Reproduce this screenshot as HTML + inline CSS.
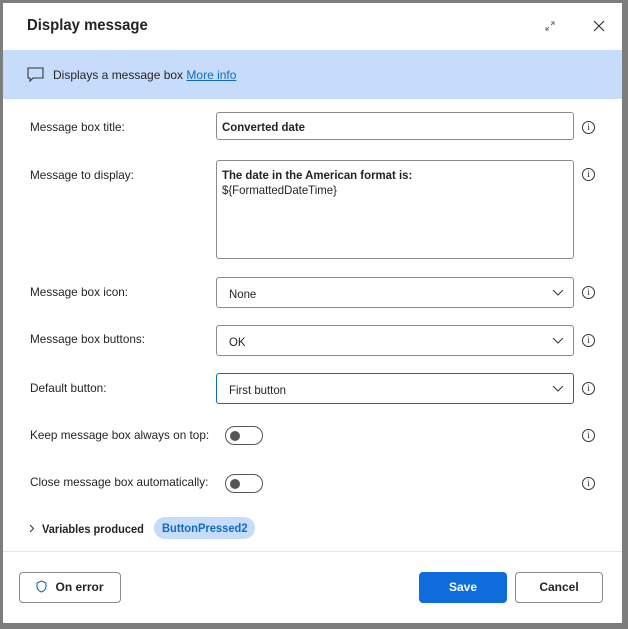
<!DOCTYPE html><html><head><style>
body{margin:0;width:628px;height:629px;background:#7d7d7d;font-family:"Liberation Sans",sans-serif;position:relative;overflow:hidden;color:#242424}
.d{position:absolute;left:3px;top:3px;width:619px;height:620px;background:#fff}
.a{position:absolute}
.s{display:inline-block;transform:scaleX(.95);transform-origin:0 50%;white-space:nowrap}
.lbl{position:absolute;left:30px;font-size:12px;color:#242424;transform:scaleX(.98);transform-origin:0 50%;white-space:nowrap}
.in{position:absolute;left:216px;width:358px;border:1px solid #8a8a8a;border-radius:3px;box-sizing:border-box;font-size:12px;background:#fff}
.info{position:absolute;left:582px;width:13px;height:13px;border:1px solid #333;border-radius:50%;box-sizing:border-box;font-size:9px;text-align:center;line-height:11px;font-family:"Liberation Serif",serif}
.chev{position:absolute;right:9px;top:11px}
.tg{position:absolute;left:225px;width:38px;height:19px;border:1px solid #555;border-radius:10px;box-sizing:border-box}
.tg::after{content:"";position:absolute;left:4px;top:4px;width:10px;height:10px;border-radius:50%;background:#555}
.btn{position:absolute;top:572px;height:31px;border:1px solid #8a8a8a;border-radius:4px;box-sizing:border-box;font-size:12px;text-align:center;line-height:29px;font-weight:bold}
</style></head><body>
<div class="d"></div>
<div class="a" style="left:27px;top:17px;font-size:16px;font-weight:bold"><span class="s" style="transform:scaleX(.93)">Display message</span></div>
<svg class="a" style="left:545px;top:21px" width="10" height="10"><path d="M1 9L4 6M9 1L6 4M6 1H9V4M1 6V9H4" stroke="#555" fill="none" stroke-width="0.8"/></svg>
<svg class="a" style="left:593px;top:20px" width="12" height="12"><path d="M1 1L11 11M11 1L1 11" stroke="#333" stroke-width="1.2"/></svg>
<div class="a" style="left:3px;top:50px;width:619px;height:49px;background:#c7dcfb"></div>
<svg class="a" style="left:27px;top:67px" width="17" height="16"><path d="M1 1H16V11H6L3 14V11H1Z" stroke="#333" fill="none" stroke-width="1.1"/></svg>
<div class="a" style="left:53px;top:68px;font-size:12px;white-space:nowrap">Displays a message box <span style="color:#0f6cbd;text-decoration:underline">More info</span></div>
<div class="lbl" style="top:120px">Message box title:</div>
<div class="in" style="top:112px;height:28px;padding:7px 5px;font-weight:bold"><span class="s">Converted date</span></div>
<div class="info" style="top:121px">i</div>
<div class="lbl" style="top:168px">Message to display:</div>
<div class="in" style="top:160px;height:99px;padding:7px 5px;line-height:15px"><span class="s"><b>The date in the American format is:</b><br>${FormattedDateTime}</span></div>
<div class="info" style="top:168px">i</div>
<div class="lbl" style="top:285px">Message box icon:</div>
<div class="in" style="top:277px;height:31px;padding:9px 12px"><span class="s">None</span><svg class="chev" width="12" height="8"><path d="M1 1L6 6L11 1" stroke="#333" fill="none"/></svg></div>
<div class="info" style="top:286px">i</div>
<div class="lbl" style="top:332px">Message box buttons:</div>
<div class="in" style="top:325px;height:31px;padding:9px 12px"><span class="s">OK</span><svg class="chev" width="12" height="8"><path d="M1 1L6 6L11 1" stroke="#333" fill="none"/></svg></div>
<div class="info" style="top:334px">i</div>
<div class="lbl" style="top:381px">Default button:</div>
<div class="in" style="top:373px;height:31px;padding:9px 12px;border-color:#0f6cbd"><span class="s">First button</span><svg class="chev" width="12" height="8"><path d="M1 1L6 6L11 1" stroke="#333" fill="none"/></svg></div>
<div class="info" style="top:382px">i</div>
<div class="lbl" style="top:428px">Keep message box always on top:</div>
<div class="tg" style="top:426px"></div>
<div class="info" style="top:429px">i</div>
<div class="lbl" style="top:475px">Close message box automatically:</div>
<div class="tg" style="top:474px"></div>
<div class="info" style="top:477px">i</div>
<svg class="a" style="left:29px;top:524px" width="6" height="9"><path d="M1 1L4.5 4.5L1 8" stroke="#333" fill="none"/></svg>
<div class="a" style="left:42px;top:522px;font-size:12px;font-weight:bold"><span class="s" style="transform:scaleX(.92)">Variables produced</span></div>
<div class="a" style="left:154px;top:517px;width:101px;height:22px;border-radius:11px;background:#c7dcfb;color:#0f6cbd;font-size:12px;font-weight:bold;line-height:22px"><span class="s" style="margin-left:8px;transform:scaleX(.93)">ButtonPressed2</span></div>
<div class="a" style="left:3px;top:551px;width:619px;height:1px;background:#e5e5e5"></div>
<div class="btn" style="left:19px;width:102px"><svg style="vertical-align:-2px;margin-right:8px" width="11" height="13"><path d="M5.5 1L10 3V6.5C10 9.5 8 11 5.5 12C3 11 1 9.5 1 6.5V3Z" stroke="#0f6cbd" fill="none" stroke-width="1.1"/></svg>On error</div>
<div class="btn" style="left:419px;width:88px;background:#0f6cdd;border-color:#0f6cdd;color:#fff">Save</div>
<div class="btn" style="left:515px;width:88px">Cancel</div>
</body></html>
